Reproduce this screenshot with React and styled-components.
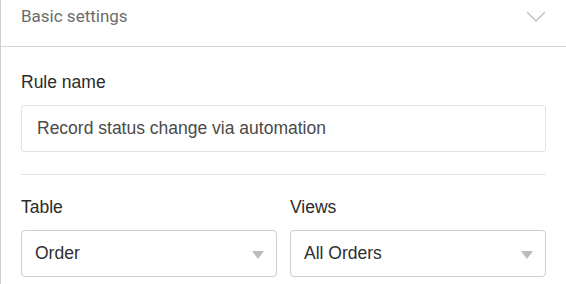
import React from "react";
import styled, { createGlobalStyle } from "styled-components";

const GlobalStyle = createGlobalStyle`
  body {
    margin: 0;
    background: #fff;
    font-family: "Liberation Sans", Arial, sans-serif;
  }
`;

const Panel = styled.div`
  width: 566px;
  height: 284px;
  box-sizing: border-box;
  border-left: 1px solid #cfcfcf;
  overflow: hidden;
`;

const Header = styled.div`
  height: 47px;
  box-sizing: border-box;
  display: flex;
  align-items: flex-start;
  justify-content: space-between;
  padding: 5px 20px 0 20px;
  border-bottom: 1px solid #d4d4d4;
`;

const HeaderTitle = styled.span`
  font-family: Roboto, "Liberation Sans", sans-serif;
  font-size: 17px;
  color: #6b6b6b;
  line-height: 22px;
`;

const Body = styled.div`
  padding: 25px 20px 0 20px;
`;

const Field = styled.div`
  display: flex;
  flex-direction: column;
  flex: 1;
  min-width: 0;
`;

const Label = styled.label`
  font-size: 17.5px;
  color: #2b2b2b;
  line-height: 20px;
  margin-bottom: 13px;
`;

const TextBox = styled.div`
  height: 47px;
  box-sizing: border-box;
  border: 1px solid #e2e2e2;
  border-radius: 3px;
  padding: 0 15px;
  display: flex;
  align-items: center;
  font-size: 17.5px;
  color: #4a4a4a;
`;

const Divider = styled.hr`
  border: none;
  border-top: 1px solid #e4e4e4;
  margin: 22px 0 0 0;
`;

const Row = styled.div`
  display: flex;
  gap: 13px;
  margin-top: 22px;
`;

const Select = styled.div`
  height: 47px;
  box-sizing: border-box;
  border: 1px solid #cdcdcd;
  border-radius: 4px;
  padding: 0 12px 0 13px;
  display: flex;
  align-items: center;
  justify-content: space-between;
  font-size: 17.5px;
  color: #2f2f2f;
`;

const Caret = styled.span`
  width: 0;
  height: 0;
  border-left: 6px solid transparent;
  border-right: 6px solid transparent;
  border-top: 8px solid #bcbcbc;
  margin-top: 2px;
`;

const Chevron = () => (
  <svg width="20" height="12" viewBox="0 0 20 12" style={{ marginTop: 6 }}>
    <path d="M1 1 L10 10 L19 1" fill="none" stroke="#c4c4c4" strokeWidth="1.5" />
  </svg>
);

export default function App() {
  return (
    <>
      <GlobalStyle />
      <Panel>
        <Header>
          <HeaderTitle>Basic settings</HeaderTitle>
          <Chevron />
        </Header>
        <Body>
          <Field>
            <Label>Rule name</Label>
            <TextBox>Record status change via automation</TextBox>
          </Field>
          <Divider />
          <Row>
            <Field>
              <Label>Table</Label>
              <Select>
                Order
                <Caret />
              </Select>
            </Field>
            <Field>
              <Label>Views</Label>
              <Select>
                All Orders
                <Caret />
              </Select>
            </Field>
          </Row>
        </Body>
      </Panel>
    </>
  );
}
